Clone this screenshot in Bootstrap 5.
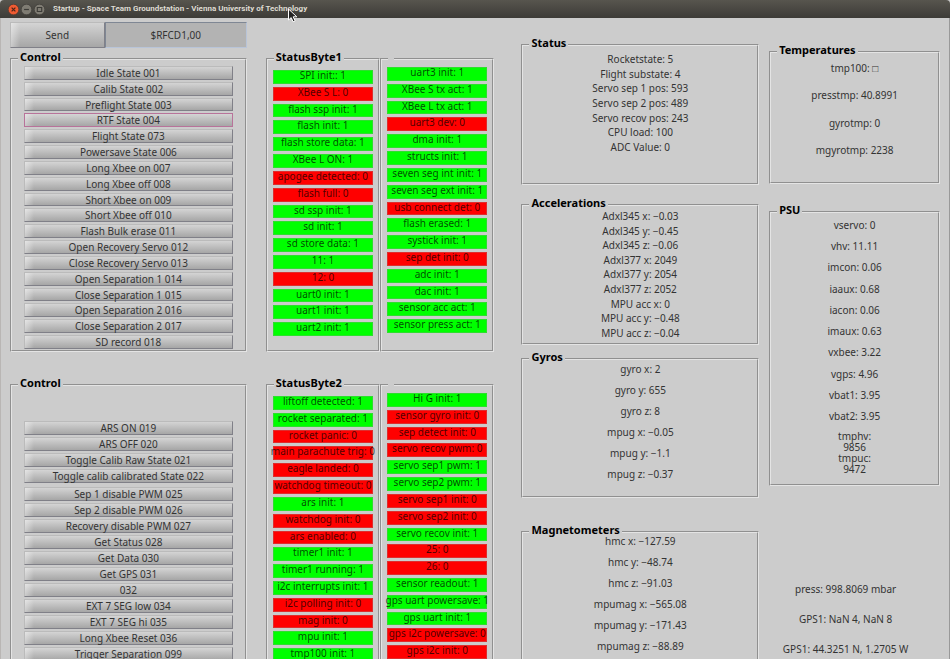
<!DOCTYPE html>
<html lang="en">
<head>
<meta charset="utf-8">
<meta name="viewport" content="width=device-width, initial-scale=1">
<title>Startup - Space Team Groundstation</title>
<link href="https://cdn.jsdelivr.net/npm/bootstrap@5.3.0/dist/css/bootstrap.min.css" rel="stylesheet">
<style>
body { font-family: "Noto Sans", sans-serif; font-size: 10px; line-height: 12px; color: #333; background: #ccc; }
.titlebar { height: 18px; padding-left: 8px; gap: 2px; background: linear-gradient(#57554e, #3c3b37); color: #dfdbd2; border-radius: 4px 4px 0 0; }
.titlebar h1 { font-family: Roboto, sans-serif; font-size: 8px; line-height: 12px; font-weight: 700; margin-left: 6px; }
.win-btn { width: 11px; height: 11px; }
.pointer { left: 287px; top: 7px; }
.console { display: grid; grid-template-columns: 237fr 248fr 265fr 181fr; padding: 4px 9px 0; border-left: 1px solid #b9b6b4; border-right: 1px solid #999; }
.pane { min-width: 0; }
.pane-status { margin-left: 19px; padding-top: 31px; }
.pane-sensors { margin-left: 27px; padding-top: 17px; }
.pane-env { margin-left: 10px; padding-top: 24px; }
.group { border: 2px groove #e4e4e4; }
.group legend { float: none; width: auto; min-width: 6px; height: 12px; font-size: 11px; line-height: 8px; font-weight: 700; color: #000; margin: 0 0 0 6px; padding: 0 2px; }
.metal { border: 1px solid; border-color: #bbb #808088 #808088 #bbb; background: linear-gradient(90deg, rgba(255,255,255,.4), rgba(255,255,255,0) 9px), linear-gradient(#d4d4d4, #a6a6a6); color: #333; }
.send { width: 40%; height: 26px; }
.command { height: 26px; background: #b3b3b3; border: 1px solid; border-color: #7f8794 #b8c4d8 #b8c4d8 #7f8794; color: #333; }
.cmds { display: grid; padding: 1px 12px 0; }
.cmds-a { height: 286px; grid-auto-rows: minmax(0, 1fr); margin-bottom: -1px; }
.cmds-b { grid-auto-rows: 16px; padding-top: 30px; }
.cmds-more { padding-top: 2px; }
.cmds .metal { margin-bottom: 2px; padding: 0; line-height: 12px; min-height: 0; }
.cmds .metal.active-cmd { border-color: #b8739a; }
.flags { list-style: none; margin: 0; padding: 0 5px; display: grid; grid-template-columns: minmax(0, 1fr); grid-auto-rows: 1fr; row-gap: 3px; height: 266px; }
.flags li { white-space: nowrap; line-height: 9px; color: rgba(0,0,0,.72); display: flex; justify-content: center; border: 1px solid rgba(150,150,150,.3); }
.flags .on { background: #0f0; }
.flags .off { background: #f00; }
.first-col { padding: 5px 0 14px; }
.second-col { padding: 2px 0 17px; }
.readings { list-style: none; margin: 0; padding: 0; text-align: center; display: grid; grid-auto-rows: 1fr; align-items: center; }
.r-status { height: 102px; margin: 1px 0 29px; }
.r-accel { height: 131px; margin: -2px 0 3px; }
.r-gyro { height: 127px; margin: -7px 0 11px; }
.r-mag { height: 127px; margin: -8px 0 20px; }
.r-temp { height: 110px; margin: -4px 0 18px; }
.r-psu { height: 213px; margin-top: -4px; }
.r-tmp { height: 44px; margin: 4px 0 9px; line-height: 11px; }
.r-gps { height: 90px; margin-top: 88px; padding-right: 18px; }
.sp-a { margin-top: 5px; }
.sp-ctl { margin-top: 27px; }
.sp-m { margin-top: 14px; }
.sp-g { margin-top: 8px; }
.sp-l { margin-top: 28px; }
.sp-p { margin-top: 22px; }
</style>
<script src="https://cdn.jsdelivr.net/npm/bootstrap@5.3.0/dist/js/bootstrap.bundle.min.js"></script>
</head>
<body class="vh-100 overflow-hidden d-flex flex-column position-relative">
<header class="titlebar d-flex align-items-center flex-shrink-0">
  <svg class="win-btn" viewBox="0 0 10 10" aria-label="Close"><circle cx="5" cy="5" r="4.8" fill="#ef5b32" stroke="#33322e" stroke-width=".5"/><path d="M3.3 3.3l3.4 3.4M6.7 3.3L3.3 6.7" stroke="#4b2418" stroke-width="1.1"/></svg>
  <svg class="win-btn" viewBox="0 0 10 10" aria-label="Minimize"><circle cx="5" cy="5" r="4.8" fill="#7f7c73" stroke="#33322e" stroke-width=".5"/><path d="M2.8 5h4.4" stroke="#3c3b37" stroke-width="1.1"/></svg>
  <svg class="win-btn" viewBox="0 0 10 10" aria-label="Maximize"><circle cx="5" cy="5" r="4.8" fill="#7f7c73" stroke="#33322e" stroke-width=".5"/><path d="M3 3.2h4v3.6H3z" fill="none" stroke="#3c3b37"/></svg>
  <h1 class="mb-0 text-nowrap">Startup - Space Team Groundstation - Vienna University of Technology</h1>
</header>
<svg class="pointer position-absolute" width="11" height="16" viewBox="0 0 11 16" aria-hidden="true"><path d="M1.5 2v11l2.7-2.4 1.9 4.2 2-1-1.9-4h3.6z" fill="#222" stroke="#fff" stroke-width="1"/></svg>

<main class="console flex-grow-1">
  <section class="pane">
    <form class="d-flex" onsubmit="return false">
      <button type="submit" class="metal send flex-shrink-0">Send</button>
      <input type="text" class="command flex-fill w-100 text-center rounded-0" aria-label="Command" value="$RFCD1,00">
    </form>
    <fieldset class="group sp-a">
      <legend>Control</legend>
      <div class="cmds cmds-a">
        <button type="button" class="metal">Idle State 001</button>
        <button type="button" class="metal">Calib State 002</button>
        <button type="button" class="metal">Preflight State 003</button>
        <button type="button" class="metal active-cmd">RTF State 004</button>
        <button type="button" class="metal">Flight State 073</button>
        <button type="button" class="metal">Powersave State 006</button>
        <button type="button" class="metal">Long Xbee on 007</button>
        <button type="button" class="metal">Long Xbee off 008</button>
        <button type="button" class="metal">Short Xbee on 009</button>
        <button type="button" class="metal">Short Xbee off 010</button>
        <button type="button" class="metal">Flash Bulk erase 011</button>
        <button type="button" class="metal">Open Recovery Servo 012</button>
        <button type="button" class="metal">Close Recovery Servo 013</button>
        <button type="button" class="metal">Open Separation 1 014</button>
        <button type="button" class="metal">Close Separation 1 015</button>
        <button type="button" class="metal">Open Separation 2 016</button>
        <button type="button" class="metal">Close Separation 2 017</button>
        <button type="button" class="metal">SD record 018</button>
      </div>
    </fieldset>
    <fieldset class="group sp-ctl">
      <legend>Control</legend>
      <div class="cmds cmds-b">
        <button type="button" class="metal">ARS ON 019</button>
        <button type="button" class="metal">ARS OFF 020</button>
        <button type="button" class="metal">Toggle Calib Raw State 021</button>
        <button type="button" class="metal">Toggle calib calibrated State 022</button>
      </div>
      <div class="cmds cmds-b cmds-more">
        <button type="button" class="metal">Sep 1 disable PWM 025</button>
        <button type="button" class="metal">Sep 2 disable PWM 026</button>
        <button type="button" class="metal">Recovery disable PWM 027</button>
        <button type="button" class="metal">Get Status 028</button>
        <button type="button" class="metal">Get Data 030</button>
        <button type="button" class="metal">Get GPS 031</button>
        <button type="button" class="metal">032</button>
        <button type="button" class="metal">EXT 7 SEG low 034</button>
        <button type="button" class="metal">EXT 7 SEG hi 035</button>
        <button type="button" class="metal">Long Xbee Reset 036</button>
        <button type="button" class="metal">Trigger Separation 099</button>
      </div>
    </fieldset>
  </section>

  <section class="pane pane-status">
    <div class="row row-cols-2 g-0">
      <fieldset class="group">
        <legend>StatusByte1</legend>
        <div class="first-col"><ul class="flags">
          <li class="on">SPI init:: 1</li><li class="off">XBee S L: 0</li>
          <li class="on">flash ssp init: 1</li><li class="on">flash init: 1</li>
          <li class="on">flash store data: 1</li><li class="on">XBee L ON: 1</li>
          <li class="off">apogee detected: 0</li><li class="off">flash full: 0</li>
          <li class="on">sd ssp init: 1</li><li class="on">sd init: 1</li>
          <li class="on">sd store data: 1</li><li class="on">11: 1</li>
          <li class="off">12: 0</li><li class="on">uart0 init: 1</li>
          <li class="on">uart1 init: 1</li><li class="on">uart2 init: 1</li>
        </ul></div>
      </fieldset>
      <fieldset class="group">
        <legend></legend>
        <div class="second-col"><ul class="flags">
          <li class="on">uart3 init: 1</li><li class="on">XBee S tx act: 1</li>
          <li class="on">XBee L tx act: 1</li><li class="off">uart3 dev: 0</li>
          <li class="on">dma init: 1</li><li class="on">structs init: 1</li>
          <li class="on">seven seg int init: 1</li><li class="on">seven seg ext init: 1</li>
          <li class="off">usb connect det: 0</li><li class="on">flash erased: 1</li>
          <li class="on">systick init: 1</li><li class="off">sep det init: 0</li>
          <li class="on">adc init: 1</li><li class="on">dac init: 1</li>
          <li class="on">sensor acc act: 1</li><li class="on">sensor press act: 1</li>
        </ul></div>
      </fieldset>
    </div>
    <div class="row row-cols-2 g-0 sp-ctl">
      <fieldset class="group">
        <legend>StatusByte2</legend>
        <div class="first-col"><ul class="flags">
          <li class="on">liftoff detected: 1</li><li class="on">rocket separated: 1</li>
          <li class="off">rocket panic: 0</li><li class="off">main parachute trig: 0</li>
          <li class="off">eagle landed: 0</li><li class="off">watchdog timeout: 0</li>
          <li class="on">ars init: 1</li><li class="off">watchdog init: 0</li>
          <li class="off">ars enabled: 0</li><li class="on">timer1 init: 1</li>
          <li class="on">timer1 running: 1</li><li class="on">i2c interrupts init: 1</li>
          <li class="off">i2c polling init: 0</li><li class="off">mag init: 0</li>
          <li class="on">mpu init: 1</li><li class="on">tmp100 init: 1</li>
        </ul></div>
      </fieldset>
      <fieldset class="group">
        <legend></legend>
        <div class="second-col"><ul class="flags">
          <li class="on">Hi G init: 1</li><li class="off">sensor gyro init: 0</li>
          <li class="off">sep detect init: 0</li><li class="off">servo recov pwm: 0</li>
          <li class="on">servo sep1 pwm: 1</li><li class="on">servo sep2 pwm: 1</li>
          <li class="off">servo sep1 init: 0</li><li class="off">servo sep2 init: 0</li>
          <li class="on">servo recov init: 1</li><li class="off">25: 0</li>
          <li class="off">26: 0</li><li class="on">sensor readout: 1</li>
          <li class="on">gps uart powersave: 1</li><li class="on">gps uart init: 1</li>
          <li class="off">gps i2c powersave: 0</li><li class="off">gps i2c init: 0</li>
        </ul></div>
      </fieldset>
    </div>
  </section>

  <section class="pane pane-sensors">
    <fieldset class="group">
      <legend>Status</legend>
      <ul class="readings r-status">
        <li>Rocketstate: 5</li><li>Flight substate: 4</li><li>Servo sep 1 pos: 593</li><li>Servo sep 2 pos: 489</li>
        <li>Servo recov pos: 243</li><li>CPU load: 100</li><li>ADC Value: 0</li>
      </ul>
    </fieldset>
    <fieldset class="group sp-m">
      <legend>Accelerations</legend>
      <ul class="readings r-accel">
        <li>Adxl345 x: −0.03</li><li>Adxl345 y: −0.45</li><li>Adxl345 z: −0.06</li>
        <li>Adxl377 x: 2049</li><li>Adxl377 y: 2054</li><li>Adxl377 z: 2052</li>
        <li>MPU acc x: 0</li><li>MPU acc y: −0.48</li><li>MPU acc z: −0.04</li>
      </ul>
    </fieldset>
    <fieldset class="group sp-g">
      <legend>Gyros</legend>
      <ul class="readings r-gyro">
        <li>gyro x: 2</li><li>gyro y: 655</li><li>gyro z: 8</li>
        <li>mpug x: −0.05</li><li>mpug y: −1.1</li><li>mpug z: −0.37</li>
      </ul>
    </fieldset>
    <fieldset class="group sp-l">
      <legend>Magnetometers</legend>
      <ul class="readings r-mag">
        <li>hmc x: −127.59</li><li>hmc y: −48.74</li><li>hmc z: −91.03</li>
        <li>mpumag x: −565.08</li><li>mpumag y: −171.43</li><li>mpumag z: −88.89</li>
      </ul>
    </fieldset>
  </section>

  <section class="pane pane-env">
    <fieldset class="group">
      <legend>Temperatures</legend>
      <ul class="readings r-temp">
        <li>tmp100: □</li><li>presstmp: 40.8991</li><li>gyrotmp: 0</li><li>mgyrotmp: 2238</li>
      </ul>
    </fieldset>
    <fieldset class="group sp-p">
      <legend>PSU</legend>
      <ul class="readings r-psu">
        <li>vservo: 0</li><li>vhv: 11.11</li><li>imcon: 0.06</li><li>iaaux: 0.68</li><li>iacon: 0.06</li>
        <li>imaux: 0.63</li><li>vxbee: 3.22</li><li>vgps: 4.96</li><li>vbat1: 3.95</li><li>vbat2: 3.95</li>
      </ul>
      <ul class="readings r-tmp">
        <li>tmphv:<br>9856</li><li>tmpuc:<br>9472</li>
      </ul>
    </fieldset>
    <ul class="readings r-gps">
      <li>press: 998.8069 mbar</li><li>GPS1: NaN 4, NaN 8</li><li>GPS1: 44.3251 N, 1.2705 W</li>
    </ul>
  </section>
</main>
</body>
</html>
